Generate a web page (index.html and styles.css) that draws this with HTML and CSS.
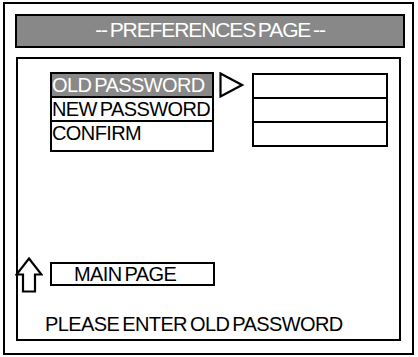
FILE: index.html
```html
<!DOCTYPE html>
<html>
<head>
<meta charset="utf-8">
<link rel="stylesheet" href="styles.css">
</head>
<body>
<div class="frame">
  <div class="header">-- PREFERENCES PAGE --</div>
  <div class="panel">
    <div class="form">
      <div class="labels">
        <div class="label active">OLD PASSWORD</div>
        <div class="label">NEW PASSWORD</div>
        <div class="label tall">CONFIRM</div>
      </div>
      <svg class="pointer" width="25" height="26" viewBox="0 0 25 26">
        <polygon points="1.5,1.5 23,13 1.5,24.5" fill="#fff" stroke="#000" stroke-width="2.2"/>
      </svg>
      <div class="inputs">
        <div class="field"></div>
        <div class="field"></div>
        <div class="field"></div>
      </div>
    </div>
    <div class="nav">
      <svg class="up" width="28" height="36" viewBox="0 0 28 36">
        <polygon points="14,1.5 26.5,17.5 20,17.5 20,34.5 8,34.5 8,17.5 1.5,17.5" fill="#fff" stroke="#000" stroke-width="2.2" stroke-linejoin="miter"/>
      </svg>
      <div class="mainpage">MAIN PAGE</div>
    </div>
    <div class="message">PLEASE ENTER OLD PASSWORD</div>
  </div>
</div>
</body>
</html>
```
FILE: styles.css
```css
* { box-sizing: border-box; }
html, body { margin: 0; padding: 0; background: #fff; }
body {
  font-family: "Liberation Sans", Arial, sans-serif;
  color: #000;
  width: 418px;
  height: 357px;
  overflow: hidden;
}
.frame {
  margin: 2px 0 0 3px;
  width: 411px;
  height: 353px;
  border: 2px solid #000;
  padding: 10px 0 0 10px;
}
.header {
  width: 390px;
  height: 34px;
  border: 2px solid #000;
  background: #888;
  color: #fff;
  font-size: 21px;
  letter-spacing: -1.1px;
  word-spacing: -2px;
  line-height: 28px;
  text-align: center;
}
.panel {
  position: relative;
  margin: 9px 0 0 1px;
  width: 385px;
  height: 284px;
  border: 2px solid #000;
  padding: 13px 0 0 32px;
  font-size: 20px;
  letter-spacing: -0.6px;
  word-spacing: -2px;
}
.form {
  display: flex;
  align-items: flex-start;
}
.labels { width: 164px; }
.label {
  border: 2px solid #000;
  height: 26px;
  line-height: 22px;
  margin-top: -2px;
  white-space: nowrap;
  overflow: hidden;
}
.label:first-child { margin-top: 0; }
.label.active { background: #888; color: #fff; }
.label.tall { height: 32px; }
.pointer { margin-left: 5px; display: block; }
.inputs { margin-left: 8px; margin-top: 1px; width: 136px; }
.field {
  border: 2px solid #000;
  height: 26px;
  margin-top: -2px;
}
.field:first-child { margin-top: 0; }
.nav {
  margin-top: 110px;
}
.up {
  position: absolute;
  left: -3px;
  top: 198px;
  display: block;
}
.mainpage {
  width: 165px;
  height: 24px;
  border: 2px solid #000;
  line-height: 20px;
  padding-left: 22px;
  white-space: nowrap;
}
.message {
  margin: 26px 0 0 -5px;
  line-height: 24px;
  white-space: nowrap;
}
```
